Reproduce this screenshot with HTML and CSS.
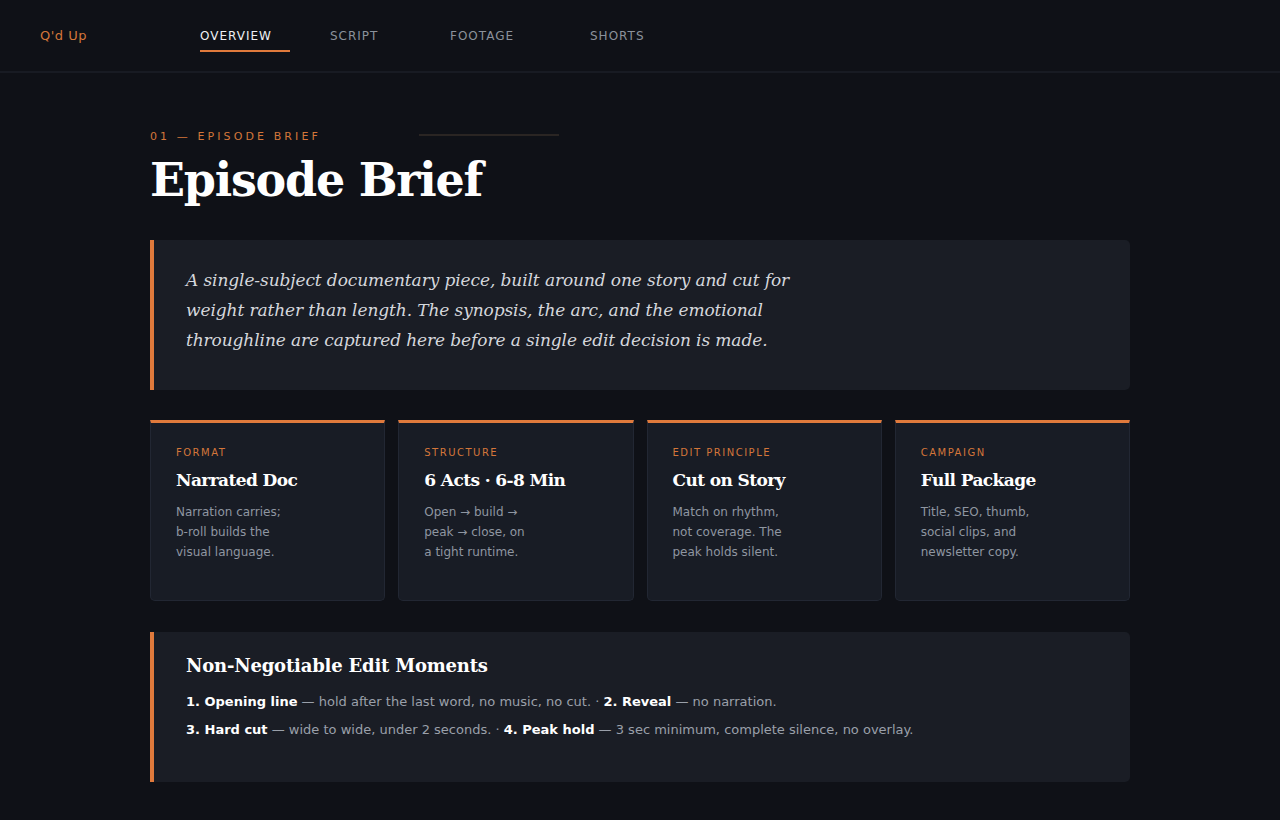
FILE: index.html
```html
<!DOCTYPE html>
<html lang="en">
<head>
<meta charset="utf-8">
<title>Q'd Up — Episode Brief</title>
<link rel="stylesheet" href="styles.css">
</head>
<body>
<header class="topbar">
  <div class="logo">Q'd Up</div>
  <nav class="tabs">
    <a class="tab active">OVERVIEW</a>
    <a class="tab">SCRIPT</a>
    <a class="tab">FOOTAGE</a>
    <a class="tab">SHORTS</a>
  </nav>
</header>
<main class="page">
  <div class="eyebrow"><span>01 — EPISODE BRIEF</span><span class="eyebrow-line"></span></div>
  <h1 class="title">Episode Brief</h1>

  <section class="synopsis">
    <p>A single-subject documentary piece, built around one story and cut for weight rather than length. The synopsis, the arc, and the emotional throughline are captured here before a single edit decision is made.</p>
  </section>

  <section class="cards">
    <div class="card">
      <div class="card-label">FORMAT</div>
      <div class="card-title">Narrated Doc</div>
      <div class="card-desc">Narration carries;<br>b-roll builds the<br>visual language.</div>
    </div>
    <div class="card">
      <div class="card-label">STRUCTURE</div>
      <div class="card-title">6 Acts · 6-8 Min</div>
      <div class="card-desc">Open → build →<br>peak → close, on<br>a tight runtime.</div>
    </div>
    <div class="card">
      <div class="card-label">EDIT PRINCIPLE</div>
      <div class="card-title">Cut on Story</div>
      <div class="card-desc">Match on rhythm,<br>not coverage. The<br>peak holds silent.</div>
    </div>
    <div class="card">
      <div class="card-label">CAMPAIGN</div>
      <div class="card-title">Full Package</div>
      <div class="card-desc">Title, SEO, thumb,<br>social clips, and<br>newsletter copy.</div>
    </div>
  </section>

  <section class="moments">
    <h2 class="moments-title">Non-Negotiable Edit Moments</h2>
    <p><b>1. Opening line</b> — hold after the last word, no music, no cut. · <b>2. Reveal</b> — no narration.</p>
    <p><b>3. Hard cut</b> — wide to wide, under 2 seconds. · <b>4. Peak hold</b> — 3 sec minimum, complete silence, no overlay.</p>
  </section>
</main>
</body>
</html>
```

FILE: styles.css
```css
* { box-sizing: border-box; }
html, body { margin: 0; padding: 0; }
body {
  background: #0f1117;
  color: #e8e8e8;
  font-family: "DejaVu Sans", "Liberation Sans", sans-serif;
  width: 1280px;
  min-height: 820px;
}

.topbar {
  height: 73px;
  display: flex;
  align-items: center;
  padding: 0 40px;
  border-bottom: 2px solid #181b23;
}
.logo {
  width: 160px;
  color: #d4763a;
  font-size: 13px;
  letter-spacing: 0.5px;
}
.tabs {
  display: grid;
  grid-template-columns: 130px 120px 140px auto;
  align-self: stretch;
}
.tab {
  display: flex;
  align-items: center;
  font-size: 12px;
  letter-spacing: 1px;
  color: #8b919b;
  text-decoration: none;
  position: relative;
  padding-top: 1px;
}
.tab.active { color: #eef0f3; }
.tab.active::after {
  content: "";
  position: absolute;
  left: 0;
  top: 50px;
  width: 90px;
  height: 2px;
  background: #e07a3c;
}

.page {
  width: 980px;
  margin: 0 auto;
  padding-top: 56px;
  padding-bottom: 40px;
}

.eyebrow {
  display: flex;
  align-items: center;
  color: #d4763a;
  font-size: 11px;
  letter-spacing: 3.1px;
  height: 14px;
}
.eyebrow-line {
  width: 140px;
  height: 2px;
  background: #2a2523;
  margin-left: 98px;
  margin-top: -2px;
}

.title {
  font-family: "DejaVu Serif", "Liberation Serif", serif;
  font-weight: bold;
  font-size: 46px;
  letter-spacing: -1.25px;
  line-height: 56px;
  margin: 9px 0 0;
  color: #ffffff;
}

.synopsis {
  margin-top: 32px;
  background: #1a1d25;
  border-left: 4px solid #e07a3c;
  border-radius: 0 5px 5px 0;
  padding: 25px 32px 35px;
}
.synopsis p {
  margin: 0;
  max-width: 640px;
  font-family: "DejaVu Serif", "Liberation Serif", serif;
  font-style: italic;
  font-size: 17px;
  letter-spacing: -0.1px;
  line-height: 30px;
  color: #d5d7dc;
}

.cards {
  margin-top: 30px;
  display: grid;
  grid-template-columns: repeat(4, 1fr);
  gap: 13px;
}
.card {
  height: 181px;
  background: #181c25;
  border: 1px solid #222733;
  border-top: 3px solid #e07a3c;
  border-radius: 0 0 5px 5px;
  padding: 23px 25px 0;
}
.card-label {
  font-size: 10px;
  letter-spacing: 1.5px;
  color: #d4763a;
  line-height: 14px;
}
.card-title {
  margin-top: 9px;
  font-family: "DejaVu Serif", "Liberation Serif", serif;
  font-weight: bold;
  font-size: 17px;
  letter-spacing: -0.6px;
  color: #ffffff;
  line-height: 22px;
}
.card-desc {
  margin-top: 11px;
  font-size: 12px;
  line-height: 20px;
  color: #8f96a1;
}

.moments {
  margin-top: 31px;
  background: #1a1d25;
  border-left: 4px solid #e07a3c;
  border-radius: 0 5px 5px 0;
  padding: 22px 32px 32px;
  height: 150px;
}
.moments-title {
  margin: 0 0 10px;
  font-family: "DejaVu Serif", "Liberation Serif", serif;
  font-weight: bold;
  font-size: 18px;
  letter-spacing: -0.2px;
  line-height: 24px;
  color: #ffffff;
}
.moments p {
  margin: 0;
  font-size: 13px;
  line-height: 28px;
  color: #9aa0aa;
}
.moments b { color: #ffffff; font-weight: bold; }
```
